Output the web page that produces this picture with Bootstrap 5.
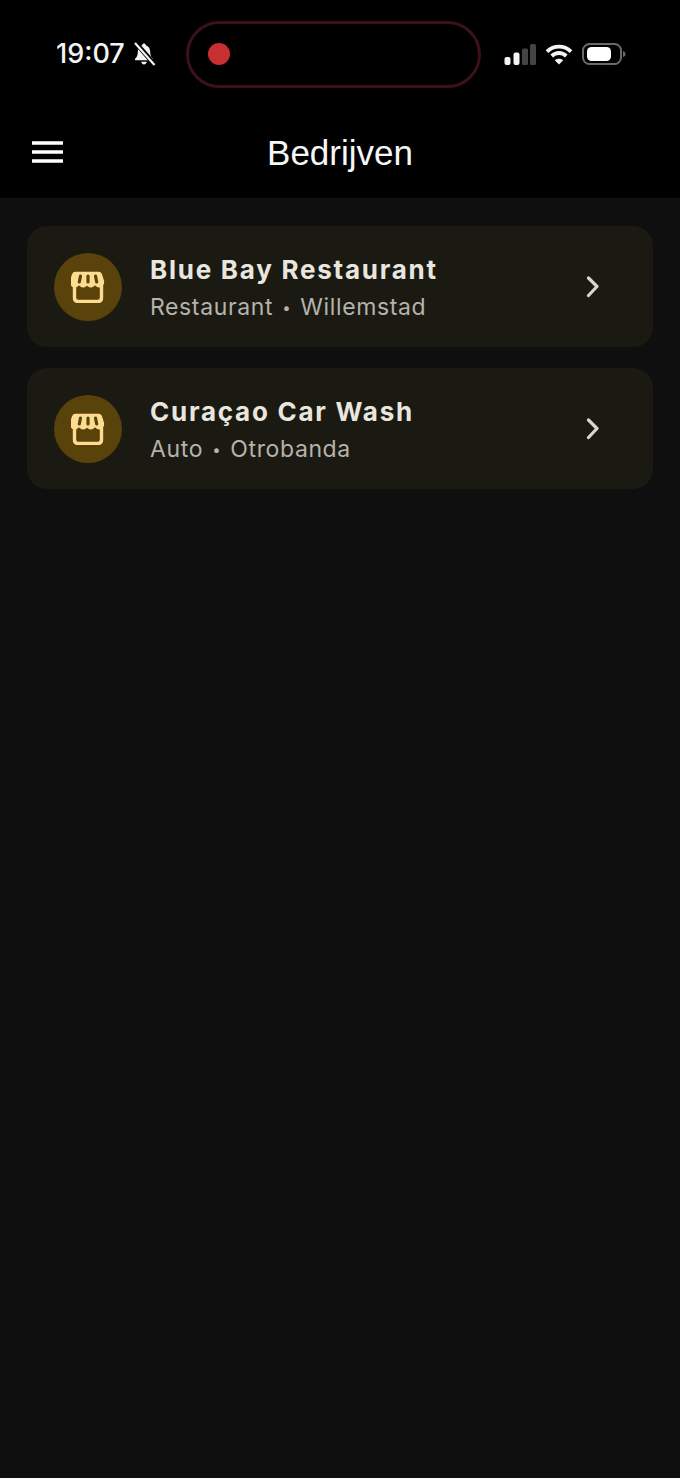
<!DOCTYPE html>
<html lang="nl">
<head>
  <meta charset="UTF-8">
  <title>Bedrijven</title>
  <link href="https://cdn.jsdelivr.net/npm/bootstrap@5.3.0/dist/css/bootstrap.min.css" rel="stylesheet">
  <style>
    body { background: #0f0f0f; font-family: Inter, "Liberation Sans", sans-serif; min-height: 1478px; }
    .kop { background: #000; height: 198px; padding-top: 20px; }
    .statusbalk { height: 68px; margin-bottom: 21px; padding: 0 50px 0 56px; }
    .tijd { width: 68px; font-size: 27px; font-weight: 500; letter-spacing: 0; color: #f4f4f4; white-space: nowrap; }
    .bel { margin: 0 30px 0 9px; flex-shrink: 0; }
    .eiland { width: 295px; height: 67px; border: 3px solid #3a1218; border-radius: 34px; padding-left: 19px; flex-shrink: 0; }
    .rec { width: 22px; height: 22px; background: #c72f33; }
    .statusiconen { margin-left: 23px; gap: 9px; flex-shrink: 0; }
    .titelbalk { height: 89px; padding: 0 32px; position: relative; }
    .menuknop { margin-top: 32px; }
    .titelbalk h1 { font-family: "Liberation Sans", sans-serif; font-size: 35px; font-weight: 400; letter-spacing: 0; color: #f7f7f7; position: absolute; left: 0; right: 0; top: 23px; margin: 0; text-align: center; }
    .lijst { padding: 28px 27px 0; gap: 21px; }
    .bedrijf { background: #1b1a12; height: 121px; border-radius: 20px; padding: 0 52px 0 27px; }
    .rondje { width: 68px; height: 68px; background: #5a430b; flex-shrink: 0; margin-right: 28px; }
    .naam { font-size: 26px; font-weight: 700; letter-spacing: 1.75px; line-height: 32px; color: #e9e6df; margin-top: 3px; }
    .soort { font-size: 23px; line-height: 30px; letter-spacing: .62px; color: #b5b3ac; margin-top: 6px; }
    .punt { font-size: 15px; vertical-align: 2px; margin: 0 2px; }
  </style>
</head>
<body>

<header class="kop">
  <div class="statusbalk d-flex align-items-center">
    <span class="tijd">19:07</span>
    <svg class="bel" width="23" height="24" viewBox="0 0 23 24">
      <path d="M11 1.500c-1 0-1.700.7-1.800 1.700C6.400 4 4.800 6.600 4.800 9.800c0 3.400-.8 5.300-2.800 7v1.500h18v-1.500c-2-1.700-2.800-3.600-2.800-7 0-3.200-1.600-5.800-4.400-6.600-.1-1-.8-1.700-1.800-1.700z" fill="#f4f4f4"/>
      <path d="M8.200 19.800h5.600c-.2 1.500-1.400 2.600-2.800 2.600s-2.600-1.100-2.800-2.600z" fill="#f4f4f4"/>
      <path d="M2 0 22 23" stroke="#000" stroke-width="4.800"/>
      <path d="M2 1 21.500 23" stroke="#f4f4f4" stroke-width="2.200"/>
    </svg>
    <div class="eiland d-flex align-items-center">
      <span class="rec rounded-circle"></span>
    </div>
    <div class="statusiconen d-flex align-items-center">
      <svg width="32" height="21" viewBox="0 0 32 21">
        <rect x="0.500" y="13" width="6" height="8" rx="2" fill="#f4f4f4"/>
        <rect x="9.500" y="8.500" width="6" height="12.500" rx="2" fill="#f4f4f4"/>
        <rect x="18" y="4.500" width="6" height="16.500" rx="1.500" fill="#444"/>
        <rect x="26" y="0" width="6" height="21" rx="1.500" fill="#444"/>
      </svg>
      <svg width="28" height="21" viewBox="0 0 28 21" fill="none" stroke="#f4f4f4" stroke-width="3.800">
        <path d="M2 7.600C9 1 19 1 26 7.600"/>
        <path d="M6.700 12C11 8 17 8 21.300 12"/>
        <path d="M14 20.500 9.800 16.200C12 14.200 16 14.200 18.200 16.200z" fill="#f4f4f4" stroke="none"/>
      </svg>
      <svg width="44" height="22" viewBox="0 0 44 22">
        <rect x="1" y="1" width="38" height="20" rx="6.500" fill="none" stroke="#6a6a6a" stroke-width="2"/>
        <rect x="5" y="4" width="24" height="14" rx="4.500" fill="#fff"/>
        <path d="M41 8c1.800.5 2.500 1.500 2.500 3s-.7 2.500-2.500 3z" fill="#6a6a6a"/>
      </svg>
    </div>
  </div>
  <div class="titelbalk d-flex align-items-start">
    <svg class="menuknop" width="31" height="22" viewBox="0 0 31 22">
      <path d="M0 2h31M0 11h31M0 20h31" stroke="#fff" stroke-width="3.400"/>
    </svg>
    <h1>Bedrijven</h1>
  </div>
</header>

<main class="lijst d-flex flex-column">
  <div class="bedrijf d-flex align-items-center">
    <div class="rondje rounded-circle d-flex align-items-center justify-content-center">
      <svg width="34" height="32" viewBox="0 0 34 32" fill="none" stroke-linejoin="round" stroke-linecap="round">
        <path d="M6.500 1.500h21c1.500 0 2.300.7 2.800 2l2 6.500c.6 3.200-1.400 5.700-3.900 5.700-2 0-3.500-1-4.400-2.700-.9 1.700-2.500 2.700-4.200 2.700s-3.100-1-3.800-2.700c-.7 1.700-2.100 2.700-3.800 2.700s-3.300-1-4.200-2.700c-.9 1.700-2.400 2.700-4.400 2.700-2.500 0-4.500-2.500-3.900-5.700l2-6.500c.5-1.300 1.300-2 2.800-2z" fill="#fddc92" stroke="#fddc92" stroke-width="1.500"/>
        <path d="M3.500 15v11.500c0 2.500 1.300 4 3.500 4h20c2.200 0 3.500-1.500 3.500-4V15" stroke="#fddc92" stroke-width="3.400"/>
        <path d="M9.500 5 8.300 11M17 5v6M24.500 5 25.700 11" stroke="#5a430b" stroke-width="3.200"/>
      </svg>
    </div>
    <div class="flex-grow-1">
      <div class="naam">Blue Bay Restaurant</div>
      <div class="soort">Restaurant <span class="punt">•</span> Willemstad</div>
    </div>
    <svg width="15" height="22" viewBox="0 0 15 22" fill="none" stroke="#d8d6cf" stroke-width="3.200" stroke-linecap="round" stroke-linejoin="round">
      <path d="M2.500 2 11 10.500 2.500 19.500"/>
    </svg>
  </div>
  <div class="bedrijf d-flex align-items-center">
    <div class="rondje rounded-circle d-flex align-items-center justify-content-center">
      <svg width="34" height="32" viewBox="0 0 34 32" fill="none" stroke-linejoin="round" stroke-linecap="round">
        <path d="M6.500 1.500h21c1.500 0 2.300.7 2.800 2l2 6.500c.6 3.200-1.400 5.700-3.900 5.700-2 0-3.500-1-4.400-2.700-.9 1.700-2.500 2.700-4.200 2.700s-3.100-1-3.800-2.700c-.7 1.700-2.100 2.700-3.800 2.700s-3.300-1-4.200-2.700c-.9 1.700-2.400 2.700-4.400 2.700-2.500 0-4.500-2.500-3.900-5.700l2-6.500c.5-1.300 1.300-2 2.800-2z" fill="#fddc92" stroke="#fddc92" stroke-width="1.500"/>
        <path d="M3.500 15v11.500c0 2.500 1.300 4 3.500 4h20c2.200 0 3.500-1.500 3.500-4V15" stroke="#fddc92" stroke-width="3.400"/>
        <path d="M9.500 5 8.300 11M17 5v6M24.500 5 25.700 11" stroke="#5a430b" stroke-width="3.200"/>
      </svg>
    </div>
    <div class="flex-grow-1">
      <div class="naam">Curaçao Car Wash</div>
      <div class="soort">Auto <span class="punt">•</span> Otrobanda</div>
    </div>
    <svg width="15" height="22" viewBox="0 0 15 22" fill="none" stroke="#d8d6cf" stroke-width="3.200" stroke-linecap="round" stroke-linejoin="round">
      <path d="M2.500 2 11 10.500 2.500 19.500"/>
    </svg>
  </div>
</main>

<script src="https://cdn.jsdelivr.net/npm/bootstrap@5.3.0/dist/js/bootstrap.bundle.min.js"></script>
</body>
</html>
